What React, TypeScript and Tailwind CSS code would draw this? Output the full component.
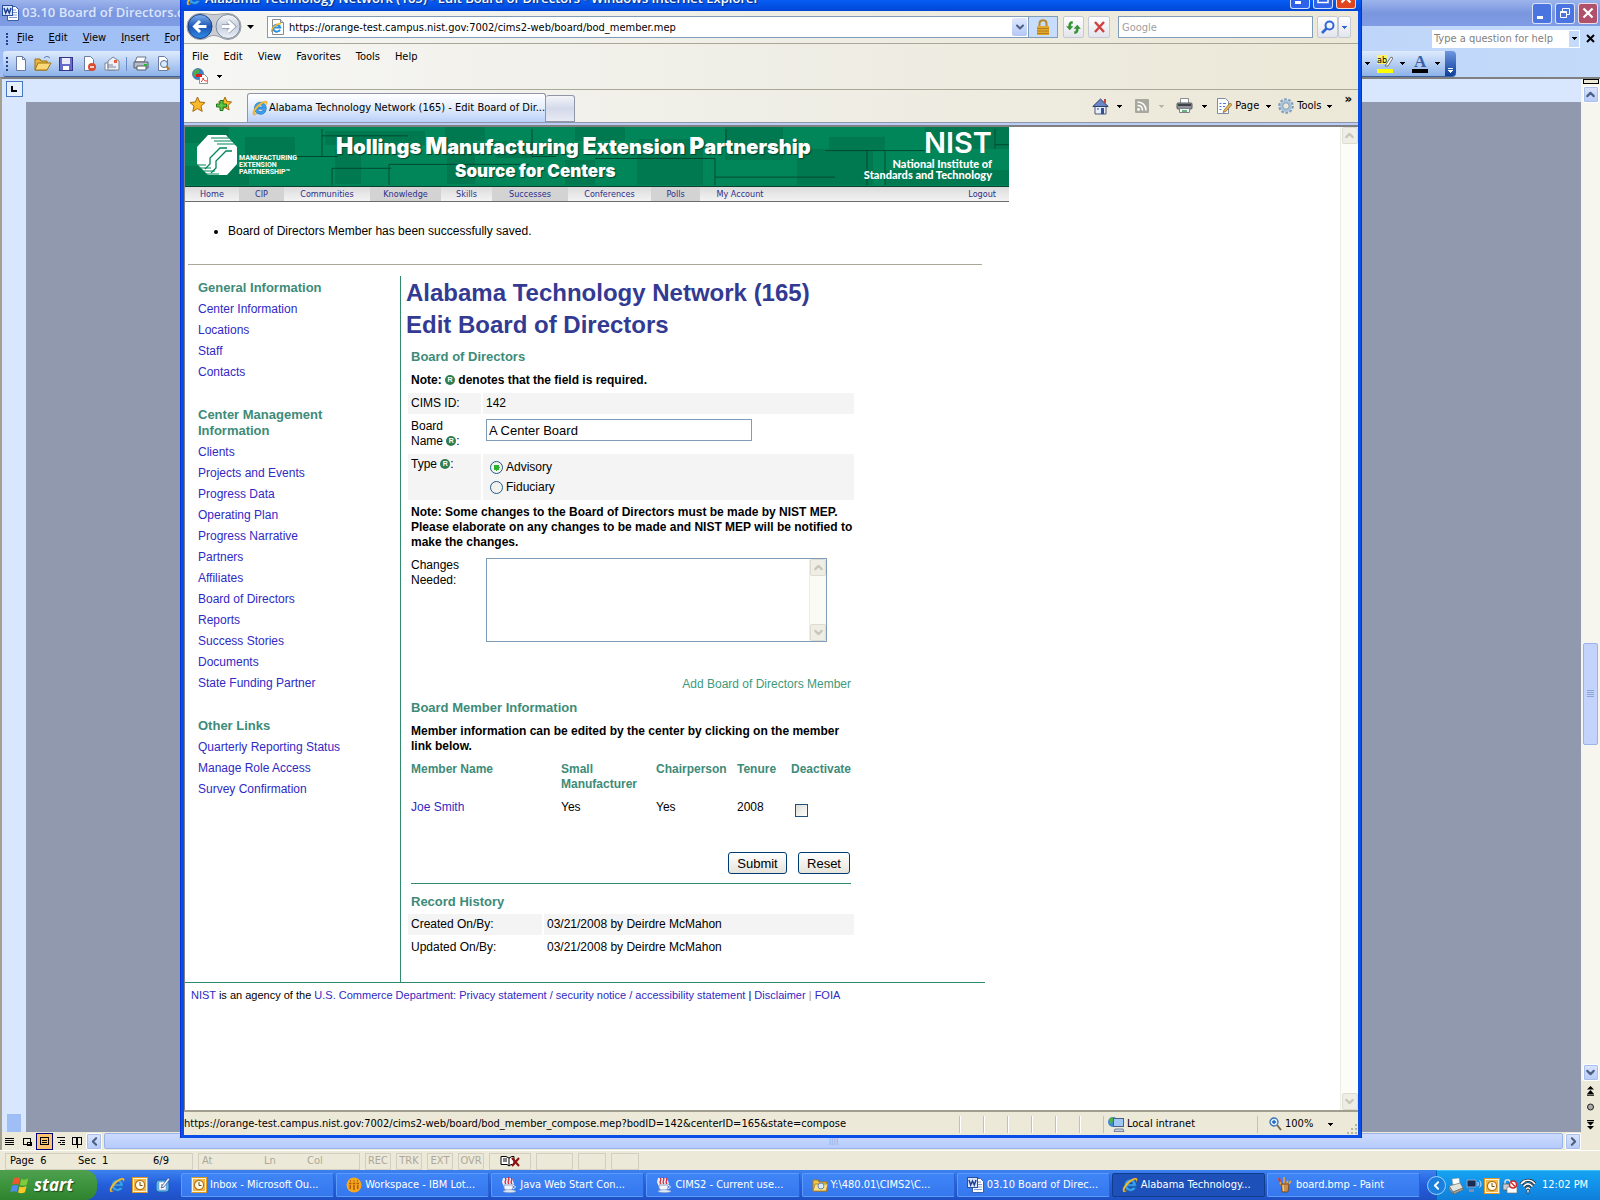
import { ReactNode } from 'react'
import { ChevronDown, ChevronLeft, ChevronRight, ChevronUp } from 'lucide-react'

const ui = "font-['DejaVu_Sans_Condensed','DejaVu_Sans',sans-serif]"

/* ---------- small icons ---------- */

function Caret({ className = 'text-black' }: { className?: string }) {
  return (
    <svg width="5" height="3" viewBox="0 0 5 3" className={`shrink-0 ${className}`} shapeRendering="crispEdges">
      <path d="M0 0h5v1H4v1H3v1H2V2H1V1H0z" fill="currentColor" />
    </svg>
  )
}

function IEIcon({ size = 16 }: { size?: number }) {
  return (
    <svg width={size} height={size} viewBox="0 0 16 16" className="shrink-0">
      <path d="M8.300 2.200a6 6 0 1 0 5.700 8.300h-3.400A2.800 2.800 0 0 1 5.600 9.300h8.700C14.600 5.200 12 2.200 8.300 2.200zM5.600 6.900a2.700 2.700 0 0 1 5.300 0z" fill="#3aa0ee" stroke="#1463b0" strokeWidth=".6" />
      <path d="M1.300 14.700C-.5 12.500 3 6.500 8 3.200 12 .6 15.200.4 15.300 2.600c0 .8-.3 1.600-.8 2.500.2-1.900-.5-2.700-2.400-2.100C7.900 4.400 2.600 10.600 2.500 13.200c0 1 1 1 2.500.4-1.500 1.300-3 1.900-3.700 1.100z" fill="#f9c132" stroke="#c98a10" strokeWidth=".3" />
    </svg>
  )
}

function PageIEIcon() {
  return (
    <svg width="16" height="16" viewBox="0 0 16 16" className="shrink-0">
      <path d="M2.500.5h8l3 3v12h-11z" fill="#fff" stroke="#8a8a8a" />
      <path d="M10.500.5v3h3" fill="#ddd" stroke="#8a8a8a" />
      <path d="M10 10.800A3.500 3.500 0 1 1 10.300 8.500H4" fill="none" stroke="#2a8fe0" strokeWidth="1.900" />
      <path d="M1.500 13C1 9.500 6 4.500 11 4.500" fill="none" stroke="#f4b92a" strokeWidth="1.300" />
    </svg>
  )
}

function WordIcon() {
  return (
    <svg width="17" height="16" viewBox="0 0 17 16" className="shrink-0">
      <path d="M5.500 1.500h8l3 3v11h-11z" fill="#fff" stroke="#3b5fa8" />
      <path d="M9 5h5M9 7.500h6M9 10h6M7 12.500h8" stroke="#7b9bd6" />
      <rect x=".5" y=".5" width="10" height="10" fill="#dbe6fa" stroke="#2a4f9e" />
      <path d="M2 3l1.700 5L5.500 4l1.800 4L9 3" fill="none" stroke="#1d3f91" strokeWidth="1.500" />
    </svg>
  )
}

function OutlookIcon() {
  return (
    <svg width="16" height="16" viewBox="0 0 16 16" className="shrink-0">
      <rect x=".5" y=".5" width="15" height="15" fill="#fff3cf" stroke="#e09a24" />
      <rect x="2" y="2" width="12" height="12" fill="#f2b84b" />
      <circle cx="8" cy="8" r="4.600" fill="#fffbea" stroke="#b8761a" strokeWidth="1.200" />
      <path d="M8 5v3.500h2.500" fill="none" stroke="#7a4a0a" />
    </svg>
  )
}

function JavaIcon() {
  return (
    <svg width="16" height="16" viewBox="0 0 16 16" className="shrink-0">
      <path d="M2 1h9l2 6-3 3H3L1 5z" fill="#fff" opacity=".9" />
      <path d="M4 1c3 2-2 3 1 6M7 .5c3 2-2 3.500 1 6.500M10 1c3 2-2 3 1 6" fill="none" stroke="#d8242f" strokeWidth="1.300" />
      <path d="M3 8h9v2.500c0 2-2 3-4.500 3S3 12.500 3 10.500z" fill="#eef3fc" stroke="#7d92bb" strokeWidth=".8" />
      <path d="M12 8.500c3 0 3 3 0 3" fill="none" stroke="#eef3fc" />
      <ellipse cx="8.500" cy="14.200" rx="6.500" ry="1.500" fill="#dfe8f8" stroke="#7d92bb" strokeWidth=".6" />
    </svg>
  )
}

function LotusIcon() {
  return (
    <svg width="16" height="16" viewBox="0 0 16 16" className="shrink-0">
      <circle cx="8" cy="8" r="7.500" fill="#f6a81c" />
      <path d="M3 6.500h2.500M6.700 6.500h2.600M10.500 6.500H13M4.300 8v4M8 8v5M11.700 8v4" stroke="#b3560a" strokeWidth="1.500" />
      <path d="M4 4h1M7.500 4h1M11 4h1" stroke="#b3560a" strokeWidth="1.500" />
    </svg>
  )
}

function FolderIcon() {
  return (
    <svg width="16" height="16" viewBox="0 0 16 16" className="shrink-0">
      <path d="M1 3h5l1 2h8v9H1z" fill="#f3c453" stroke="#a87a15" />
      <path d="M3 7h13l-2 7H1z" fill="#fbe08c" stroke="#a87a15" strokeWidth=".8" />
      <circle cx="9" cy="9" r="3" fill="#d4ecfb" stroke="#6c86a6" />
    </svg>
  )
}

function PaintIcon() {
  return (
    <svg width="16" height="16" viewBox="0 0 16 16" className="shrink-0">
      <path d="M4 8L2 1M7 8V0M9 8l3-7M11 8l3-4" strokeWidth="1.600" stroke="#e9a33a" />
      <path d="M3 5L2 1" stroke="#d33" strokeWidth="2" />
      <path d="M11 3.500l1-2.500" stroke="#3a7be0" strokeWidth="2" />
      <path d="M4 7h8l-1 8H5z" fill="#c98e4d" stroke="#6d4313" strokeWidth=".8" />
      <path d="M6 8l.5 6" stroke="#f6d7a4" />
    </svg>
  )
}

function DesktopIcon() {
  return (
    <svg width="16" height="16" viewBox="0 0 16 16" className="shrink-0">
      <rect x="1" y="3" width="13" height="12" rx="3" fill="#5db3ee" stroke="#1c5fae" />
      <rect x="4" y="5" width="7" height="8" fill="#fff" stroke="#7d9cc4" strokeWidth=".6" />
      <path d="M6 8h3M6 10h3" stroke="#2b6cc0" />
      <path d="M7 9l6-8 2 1-6 8-3 1z" fill="#f5fbff" stroke="#2a4f9e" strokeWidth=".7" />
    </svg>
  )
}

function WindowsFlag() {
  return (
    <svg width="20" height="20" viewBox="0 0 17 17" className="shrink-0">
      <path d="M3 3c2-1.300 3.800-1.200 5.500-.2L7.300 8C5.600 7 4 7.200 1.800 8.200z" fill="#f2562d" />
      <path d="M9.500 3.300c2 1 3.800.8 6-.3l-1.300 5.200c-2 1.100-3.800 1.200-5.800.3z" fill="#7fcb3c" />
      <path d="M1.500 9.400c2-1.200 3.800-1.200 5.500-.2l-1.300 5.200c-1.700-1-3.500-.8-5.500.3z" fill="#4f8cf0" />
      <path d="M8.100 9.700c2 1 3.800.8 5.900-.3l-1.300 5.200c-2 1.100-3.800 1.200-5.900.3z" fill="#fbc927" />
    </svg>
  )
}

function PrinterIcon() {
  return (
    <svg width="17" height="16" viewBox="0 0 17 16" className="shrink-0">
      <path d="M4.500.5h8v5h-8z" fill="#fff" stroke="#8b8f96" />
      <rect x="1" y="5" width="15" height="6" rx="1" fill="#8e9299" stroke="#54585f" />
      <path d="M2 7h13" stroke="#3f4248" strokeWidth="2" />
      <path d="M3.500 10.500h10v4h-10z" fill="#f5f8fb" stroke="#7d8289" />
      <path d="M6 13h5" stroke="#3a9d5b" strokeWidth="1.500" />
    </svg>
  )
}

function RequiredIcon() {
  return (
    <span className="inline-flex h-[10px] w-[10px] items-center justify-center rounded-full bg-[#2f7d4f] align-[2px] text-[7px] leading-none font-bold text-white">
      R
    </span>
  )
}

/* ---------- shared chrome ---------- */

const arrows = { up: ChevronUp, down: ChevronDown, left: ChevronLeft, right: ChevronRight }

function ScrollButton({ dir, disabled }: { dir: keyof typeof arrows; disabled?: boolean }) {
  const Icon = arrows[dir]
  return (
    <button
      aria-label={`Scroll ${dir}`}
      className={`flex h-[17px] w-[16px] shrink-0 items-center justify-center rounded-[2px] border ${
        disabled
          ? 'border-[#dcdccf] bg-[#efeee6] text-[#c9c7ba]'
          : 'border-white bg-gradient-to-b from-[#dbe5fe] to-[#b6cbf8] text-[#4d6185] shadow-[0_0_0_1px_#a9bfec_inset]'
      }`}
    >
      <Icon size={13} strokeWidth={4} />
    </button>
  )
}

function CaptionButton({ kind, className }: { kind: 'min' | 'max' | 'restore' | 'close'; className: string }) {
  return (
    <button aria-label={kind} className={`flex h-[21px] w-[20px] items-center justify-center rounded-[3px] border border-white/80 ${className}`}>
      <svg width="14" height="14" viewBox="0 0 14 14" fill="none" stroke="#fff">
        {kind === 'min' && <path d="M2 11.500h6" strokeWidth="3" />}
        {kind === 'max' && <path d="M2 3h10v8.500H2zM2 3.500h10" strokeWidth="1.500" />}
        {kind === 'restore' && <path d="M4.500 5V2.500h7v6H9M2.500 5.500h6v6h-6zM2.500 6.500h6" />}
        {kind === 'close' && <path d="M2.500 2.500l9 9M11.500 2.500l-9 9" strokeWidth="2.200" />}
      </svg>
    </button>
  )
}

/* ---------- Word window ---------- */

function WordToolbarIcons() {
  return (
    <svg width="160" height="18" viewBox="0 0 160 18" className="shrink-0">
      <path d="M3.500 1.500h6l3 3v11h-9z" fill="#fff" stroke="#6b7ba3" />
      <path d="M9.500 1.500v3h3" fill="none" stroke="#6b7ba3" />
      <path d="M22 4h5l1 2h6v9H22z" fill="#e8b33e" stroke="#9c7214" />
      <path d="M25 8h13l-4 7H22z" fill="#fbd878" stroke="#9c7214" />
      <path d="M31 3c2-2 4-2 6 0" fill="none" stroke="#4c6fae" />
      <rect x="46.500" y="2.500" width="13" height="13" fill="#6a6ac8" stroke="#33338a" />
      <rect x="49" y="3" width="8" height="6" fill="#e8ecfa" />
      <rect x="50" y="11" width="6" height="4" fill="#fff" />
      <path d="M71.500 1.500h6l3 3v11h-9z" fill="#fff" stroke="#6b7ba3" />
      <circle cx="79" cy="12" r="4" fill="#db4c35" />
      <path d="M77 12h4" stroke="#fff" strokeWidth="1.500" />
      <path d="M92 8h10v7H92z" fill="#fff" stroke="#7c8499" />
      <path d="M95 6l5-4 6 4v9H95z" fill="#eef0f6" stroke="#7c8499" />
      <path d="M94 10h6M94 12h9" stroke="#7c8499" />
      <rect x="101" y="5" width="3" height="3" fill="#e0613c" />
      <path d="M113.500 2v14" stroke="#6a8ccb" />
      <path d="M124 2h9l-2 5h-9z" fill="#fff" stroke="#6d7486" />
      <path d="M121 7h14v6h-14z" fill="#b9bdc8" stroke="#555c6d" />
      <path d="M124 11h9v4h-9z" fill="#fff" stroke="#555c6d" />
      <rect x="131" y="9" width="3" height="2" fill="#2db23a" />
      <path d="M145.500 1.500h6l3 3v11h-9z" fill="#fff" stroke="#6b7ba3" />
      <circle cx="151" cy="9" r="3.500" fill="#d8ecfa" stroke="#5a6f94" />
      <path d="M153.500 11.500l3 3" stroke="#c07c23" strokeWidth="2" />
    </svg>
  )
}

function WordWindow() {
  return (
    <div className={`flex min-h-0 flex-1 flex-col text-[11px] ${ui}`}>
      <div className="flex h-[26px] shrink-0 items-center justify-between bg-gradient-to-b from-[#9db5ec] via-[#7a96df] to-[#7f9ce4] px-[2px]">
        <div className="flex items-center gap-[3px] font-['Open_Sans',sans-serif] text-[13px] font-semibold whitespace-nowrap text-[#dbe5fb]">
          <WordIcon />
          03.10 Board of Directors.doc - Microsoft Word
        </div>
        <div className="flex gap-[3px]">
          <CaptionButton kind="min" className="bg-[#4a74e0]" />
          <CaptionButton kind="restore" className="bg-[#4a74e0]" />
          <CaptionButton kind="close" className="bg-[#b0506a]" />
        </div>
      </div>

      <div className="flex h-[25px] shrink-0 items-center justify-between bg-gradient-to-r from-[#9ebef5] to-[#c4dafa] pr-[5px] pl-[6px]">
        <nav className="flex items-center">
          <span className="mr-[9px] h-[12px] border-l-2 border-dotted border-[#27418f]" />
          <div className="flex gap-[15px]">
            {['File', 'Edit', 'View', 'Insert', 'Format', 'Tools'].map((m) => (
              <button key={m}>
                <u>{m[0]}</u>
                {m.slice(1)}
              </button>
            ))}
          </div>
        </nav>
        <div className="flex items-center">
          <input aria-label="Help question" placeholder="Type a question for help" className="h-[18px] w-[136px] bg-white px-[2px] placeholder:text-[#7f7f7f]" />
          <button aria-label="Help list" className="flex h-[18px] w-[12px] items-center justify-center border border-white bg-[#c4dafa]">
            <Caret />
          </button>
          <button aria-label="Close document" className="ml-[6px]">
            <svg width="9" height="9" viewBox="0 0 9 9" stroke="#000" strokeWidth="2"><path d="M1 1l7 7M8 1l-7 7" /></svg>
          </button>
        </div>
      </div>

      <div className="flex h-[26px] shrink-0 justify-between bg-gradient-to-r from-[#9ebef5] to-[#c4dafa] pr-[144px] pl-[3px]">
        <div className="flex w-[400px] items-center rounded-l-[3px] border-b border-[#3b619c] bg-gradient-to-b from-[#dfebfd] to-[#8db2e8] pl-[3px]">
          <span className="mr-[5px] h-[14px] border-l-2 border-dotted border-[#27418f]" />
          <WordToolbarIcons />
        </div>
        <div className="flex w-[300px] items-center justify-end rounded-r-[4px] border-b border-[#3b619c] bg-gradient-to-b from-[#dfebfd] to-[#8db2e8]">
          <div className="flex items-center gap-[7px] pr-[5px]">
            <Caret />
            <svg width="16" height="18" viewBox="0 0 16 18">
              <rect width="11" height="9" fill="#fbf36b" />
              <text x="0" y="8" fontSize="9" fill="#000">ab</text>
              <path d="M8 11l6-9 2 1-5 8z" fill="#fff" stroke="#555" strokeWidth=".8" />
              <rect y="14" width="16" height="4" fill="#ff0" />
            </svg>
            <Caret />
            <svg width="16" height="18" viewBox="0 0 16 18">
              <text x="2" y="12" fontSize="17" fontWeight="bold" fontFamily="Liberation Serif" fill="#3b5ea9">A</text>
              <rect y="14" width="16" height="4" />
            </svg>
            <Caret />
          </div>
          <button aria-label="Toolbar options" className="flex h-full w-[11px] flex-col items-center justify-end gap-px rounded-r-[4px] bg-gradient-to-b from-[#6e97e0] to-[#0a3f9c] pb-[3px]">
            <span className="h-px w-[5px] bg-white" />
            <Caret className="text-white" />
          </button>
        </div>
      </div>

      <div className="flex min-h-0 flex-1 border-t-2 border-l-2 border-t-[#808080] border-l-[#a3a08f] bg-[#ece9d8]">
        <div className="flex min-w-0 flex-1 flex-col">
          <div className="flex min-h-0 flex-1">
            <div className="flex w-[24px] shrink-0 flex-col items-center justify-between bg-[#d8e7fd] pt-[2px]">
              <button aria-label="Tab selector" className="flex h-[16px] w-[17px] items-center justify-center border border-[#4b78c4] bg-[#e6effd]">
                <span className="h-[6px] w-[6px] border-b-2 border-l-2 border-black" />
              </button>
              <span className="h-[18px] w-[14px] bg-[#9ebef5]" />
            </div>
            <div className="flex flex-1 flex-col">
              <div className="h-[23px] bg-[#d8e7fd]" />
              <div className="flex-1 bg-[#9099ae]" />
            </div>
          </div>
          <div className="flex h-[18px] shrink-0 items-center">
            <svg width="84" height="17" viewBox="0 0 84 17" stroke="#000" fill="none" className="shrink-0" shapeRendering="crispEdges">
              <path d="M3 5.500h9M3 7.500h9M3 9.500h9M3 11.500h9" />
              <path d="M21.500 5.500h7v6h-7zM25 9h4v3h-4z" />
              <rect x="34.500" y=".5" width="16" height="16" fill="#fdc36e" stroke="#00007f" />
              <path d="M38.500 4.500h8v7h-8zM40 7.500h5M40 9.500h5" />
              <path d="M55 4.500h8M58 7.500h5M56 9.500h3M60 9.500h3M58 11.500h5" />
              <path d="M70.500 4.500h4v7h-4zM75.500 4.500h4v7h-4zM75 12v3" />
            </svg>
            <ScrollButton dir="left" />
            <div className="mx-[2px] flex h-[16px] flex-1 items-center justify-center rounded-[2px] border border-[#98b4ea] bg-gradient-to-b from-[#cddafd] to-[#b5cbfa]">
              <span className="text-[8px] text-[#8ca6dd]">||||</span>
            </div>
            <ScrollButton dir="right" />
          </div>
        </div>
        <div className="flex w-[19px] shrink-0 flex-col items-center bg-[#f6f5ee]">
          <span className="mb-[2px] h-[5px] w-[16px] border border-black bg-[#ece9d8]" />
          <ScrollButton dir="up" />
          <div className="flex w-full flex-1 flex-col items-center">
            <div className="flex-[542]" />
            <div className="flex w-[15px] flex-[100] items-center justify-center rounded-[2px] border border-[#98b4ea] bg-[#c3d3fc]">
              <svg width="7" height="8" viewBox="0 0 7 8" stroke="#8ca6dd" shapeRendering="crispEdges"><path d="M0 .5h7M0 2.500h7M0 4.500h7M0 6.500h7" /></svg>
            </div>
            <div className="flex-[320]" />
          </div>
          <ScrollButton dir="down" />
          <div className="flex h-[69px] w-full justify-center bg-[#ece9d8] pt-[5px]">
            <svg width="9" height="46" viewBox="0 0 9 46">
              <path d="M1 3.500L4.500 0 8 3.500zM1 8l3.500-4L8 8zM1 8.500h7v1.200H1z" />
              <circle cx="4.500" cy="21" r="3" fill="#aaa" stroke="#222" />
              <path d="M1 34h7v1.200H1zM1 36h7l-3.500 3.500zM1 40h7l-3.500 3.500z" />
            </svg>
          </div>
        </div>
      </div>

      <div className="flex h-[20px] shrink-0 items-stretch gap-[5px] border-t border-white bg-[#ece9d8] pt-[2px] pl-[5px]">
        <div className="flex w-[188px] items-center border border-[#d2cfc2] pl-[4px]">
          <span className="w-[68px]">Page&nbsp; 6</span>
          <span className="w-[75px]">Sec&nbsp; 1</span>
          <span>6/9</span>
        </div>
        <div className="flex w-[162px] items-center border border-[#d2cfc2] pl-[3px] text-[#aca899]">
          <span className="w-[62px]">At</span>
          <span className="w-[43px]">Ln</span>
          <span>Col</span>
        </div>
        {['REC', 'TRK', 'EXT', 'OVR'].map((k) => (
          <div key={k} className="flex w-[26px] items-center justify-center border border-[#d2cfc2] text-[#aca899]">{k}</div>
        ))}
        <div className="flex w-[42px] items-center justify-center border border-[#d2cfc2]">
          <svg width="21" height="13" viewBox="0 0 21 13" fill="#fff" stroke="#000">
            <path d="M1 1.500h5l3 1.500 3-1.500h2v8h-3l-2 1.500-2-1.500H1zM9 3v8M3 4h4M3 6h4" />
            <path d="M12 3l7 8M19 3l-7 8" stroke="#8c1010" strokeWidth="2" />
          </svg>
        </div>
        <div className="w-[37px] border border-[#d2cfc2]" />
        <div className="w-[28px] border border-[#d2cfc2]" />
        <div className="w-[28px] border border-[#d2cfc2]" />
      </div>
    </div>
  )
}

/* ---------- taskbar ---------- */

const tasks: { icon: ReactNode; label: string; active?: boolean }[] = [
  { icon: <OutlookIcon />, label: 'Inbox - Microsoft Ou...' },
  { icon: <LotusIcon />, label: 'Workspace - IBM Lot...' },
  { icon: <JavaIcon />, label: 'Java Web Start Con...' },
  { icon: <JavaIcon />, label: 'CIMS2 - Current use...' },
  { icon: <FolderIcon />, label: 'Y:\\480.01\\CIMS2\\C...' },
  { icon: <WordIcon />, label: '03.10 Board of Direc...' },
  { icon: <IEIcon />, label: 'Alabama Technology...', active: true },
  { icon: <PaintIcon />, label: 'board.bmp - Paint' },
]

function Taskbar() {
  return (
    <div className={`flex h-[30px] shrink-0 items-stretch bg-gradient-to-b from-[#3c81f0] via-[#245edb] to-[#1f50c4] text-[11px] text-white ${ui}`}>
      <button className="flex w-[97px] shrink-0 items-center gap-[4px] rounded-r-[12px] bg-gradient-to-b from-[#4fa04f] via-[#3c943c] to-[#2f832f] pl-[10px] font-['Open_Sans',sans-serif] text-[17px] font-bold italic [text-shadow:1px_1px_1px_#1d4d1d]">
        <WindowsFlag />
        start
      </button>
      <div className="flex w-[84px] shrink-0 items-center gap-[7px] pl-[12px]">
        <IEIcon />
        <OutlookIcon />
        <DesktopIcon />
      </div>
      <div className="flex min-w-0 flex-1 items-center gap-[2px] pr-[16px]">
        {tasks.map((t) => (
          <button
            key={t.label}
            className={`flex h-[24px] min-w-0 flex-1 items-center gap-[3px] rounded-[2px] border pl-[9px] whitespace-nowrap ${
              t.active ? 'border-[#123c8c] bg-[#1d50b8]' : 'border-[#5c9bfb] border-r-[#2a62d0] bg-gradient-to-b from-[#3f85f7] to-[#3577ee]'
            }`}
          >
            {t.icon}
            {t.label}
          </button>
        ))}
      </div>
      <div className="flex w-[164px] shrink-0 items-center gap-[2px] border-t border-l border-[#0b62b8] border-t-[#3fc0f5] bg-gradient-to-b from-[#15a3f0] via-[#1290e9] to-[#0f7fd8]">
        <button aria-label="Show hidden icons" className="-ml-[10px] flex h-[19px] w-[19px] shrink-0 items-center justify-center rounded-full border border-[#9ed2fb] bg-[#1b7fe0]">
          <ChevronLeft size={13} strokeWidth={3.5} />
        </button>
        <svg width="16" height="16" viewBox="0 0 16 16">
          <path d="M4 1l7-1 1 6-7 1z" fill="#fff" stroke="#9a9a9a" strokeWidth=".6" />
          <path d="M1 8l11-3 3 5-10 4z" fill="#e4e4de" stroke="#77776f" strokeWidth=".7" />
          <path d="M1 8l4 6v2l-4-5zM5 14l10-4v2L6 16z" fill="#a5a59c" stroke="#5f5f57" strokeWidth=".5" />
        </svg>
        <svg width="16" height="16" viewBox="0 0 16 16">
          <path d="M1 2h9v7H1z" fill="#1a2c52" stroke="#8fa3c8" />
          <path d="M3 11h5v3H3z" fill="#7a8fb8" />
          <path d="M11.500 4c1 1 1 3 0 4M13.500 2.500c2 2 2 5 0 7" fill="none" stroke="#d8e6fb" />
        </svg>
        <OutlookIcon />
        <svg width="16" height="16" viewBox="0 0 16 16">
          <path d="M3 6V4c0-3 5-3 5 0v2" fill="none" stroke="#ddd" strokeWidth="1.500" />
          <rect x="1" y="6" width="8" height="6" fill="#c9cdd4" stroke="#555" strokeWidth=".7" />
          <path d="M5 9h10v6H5z" fill="#fff" stroke="#777" strokeWidth=".7" />
          <circle cx="11" cy="6.500" r="3.500" fill="#fff" stroke="#d62222" strokeWidth="1.500" />
          <path d="M9 4.500l4 4" stroke="#d62222" strokeWidth="1.300" />
        </svg>
        <svg width="16" height="16" viewBox="0 0 16 16" fill="none">
          <path d="M1 6c4-5 10-5 14 0M3.500 8.500c3-3.500 6-3.500 9 0M6 11c1.500-1.700 2.500-1.700 4 0" stroke="#222" strokeWidth="3" />
          <path d="M1 6c4-5 10-5 14 0M3.500 8.500c3-3.500 6-3.500 9 0M6 11c1.500-1.700 2.500-1.700 4 0" stroke="#fff" strokeWidth="1.700" />
          <path d="M7 11.500h2V15H7z" fill="#fff" stroke="#222" strokeWidth=".6" />
        </svg>
        <span className="ml-[4px] whitespace-nowrap">12:02 PM</span>
      </div>
    </div>
  )
}

/* ---------- Internet Explorer chrome ---------- */

function BrowserChrome() {
  const square = 'flex h-[22px] items-center justify-center rounded-[2px] border border-[#c5c9d6] bg-gradient-to-b from-white to-[#e3e5ec]'
  return (
    <>
      <div className="flex h-[26px] shrink-0 items-center justify-between rounded-t-[6px] bg-gradient-to-b from-[#0a5af0] via-[#0a62fb] to-[#0046d6] px-[5px]">
        <div className="flex items-center gap-[3px] font-['Open_Sans',sans-serif] text-[13px] leading-[20px] font-semibold whitespace-nowrap text-white [text-shadow:1px_1px_1px_#0b2a80]">
          <IEIcon />
          Alabama Technology Network (165) - Edit Board of Directors - Windows Internet Explorer
        </div>
        <div className="flex gap-[3px]">
          <CaptionButton kind="min" className="bg-[#2e62e8]" />
          <CaptionButton kind="max" className="bg-[#2e62e8]" />
          <CaptionButton kind="close" className="bg-[#e0451f]" />
        </div>
      </div>

      <div className="mx-[3px] shrink-0 bg-gradient-to-r from-[#f6f6f4] via-[#efeee6] to-[#ece8d7]">
        <div className="flex h-[33px] items-center border-b border-[#a9a797] pr-[7px] pl-[2px]">
          <svg width="70" height="30" viewBox="0 0 70 30" className="shrink-0">
            <defs>
              <linearGradient id="back" x1="0" y1="0" x2="0" y2="1">
                <stop offset="0" stopColor="#7fb2f0" />
                <stop offset=".5" stopColor="#1d56b4" />
                <stop offset="1" stopColor="#2f8be8" />
              </linearGradient>
              <linearGradient id="fwd" x1="0" y1="0" x2="0" y2="1">
                <stop offset="0" stopColor="#f6f8fb" />
                <stop offset=".5" stopColor="#c6cfde" />
                <stop offset="1" stopColor="#eef2f8" />
              </linearGradient>
            </defs>
            <path d="M14 1.500c7 0 8 1 14 1s8-1 14-1a13 13 0 0 1 0 26c-6 0-8-4-14-4s-7 4-14 4a13 13 0 0 1 0-26z" fill="#c9cdd3" stroke="#9aa0a8" />
            <circle cx="14" cy="14.500" r="12" fill="url(#back)" stroke="#1b3f86" />
            <path d="M20.500 14.500H9M14 9l-5.500 5.500L14 20" fill="none" stroke="#fff" strokeWidth="3" />
            <circle cx="42" cy="14.500" r="12" fill="url(#fwd)" stroke="#7d8798" />
            <path d="M36 14.500h11M42 9l5.500 5.500L42 20" fill="none" stroke="#8b95a8" strokeWidth="4.400" />
            <path d="M36 14.500h11M42 9l5.500 5.500L42 20" fill="none" stroke="#fff" strokeWidth="3" />
            <path d="M61 13h7l-3.500 4z" />
          </svg>
          <div className="ml-[11px] flex h-[22px] min-w-0 flex-1 items-center border border-[#7f9db9] bg-white pl-[2px]">
            <PageIEIcon />
            <input aria-label="Address" defaultValue="https://orange-test.campus.nist.gov:7002/cims2-web/board/bod_member.mep" className="ml-[3px] h-[18px] min-w-0 flex-1 outline-none" />
            <button aria-label="Address history" className="flex h-[18px] w-[15px] items-center justify-center rounded-[2px] bg-gradient-to-b from-[#dfe8fe] to-[#b4c8f6] text-[#4d6185]">
              <ChevronDown size={12} strokeWidth={4} />
            </button>
            <button aria-label="Security report" className="ml-px flex h-[20px] w-[29px] items-center justify-center border-l border-[#7f9db9] bg-[#c8dcfb]">
              <svg width="14" height="16" viewBox="0 0 14 16">
                <path d="M3.500 8V4.500c0-4.500 7-4.500 7 0V8" fill="none" stroke="#b5892c" strokeWidth="2" />
                <rect x="1" y="7" width="12" height="9" fill="#e3a92f" />
                <path d="M1 9.500h12M1 12h12M1 14.500h12" stroke="#b47e17" />
              </svg>
            </button>
          </div>
          <button aria-label="Refresh" className={`ml-[5px] w-[21px] ${square}`}>
            <svg width="15" height="15" viewBox="0 0 15 15" fill="#2f9a2f" stroke="#1d6e1d" strokeWidth=".4">
              <path d="M6.500 1.500v2C5 3.500 4.800 4 4.800 6.500h2L3.700 10 .7 6.500h2C2.700 3 3.500 1.500 6.500 1.500z" />
              <path d="M8.500 13.500v-2c1.500 0 1.700-.5 1.700-3h-2L11.300 5l3 3.500h-2c0 3.500-.8 5-3.800 5z" />
            </svg>
          </button>
          <button aria-label="Stop" className={`ml-[4px] w-[22px] ${square}`}>
            <svg width="13" height="12" viewBox="0 0 13 12" stroke="#d04040" strokeWidth="2.400"><path d="M2 1l9 10M11 1L2 11" /></svg>
          </button>
          <input aria-label="Search" placeholder="Google" className="ml-[8px] h-[22px] w-[195px] border border-[#7f9db9] bg-white px-[3px] placeholder:text-[#a0a0a0]" />
          <button aria-label="Search web" className={`ml-[4px] w-[21px] ${square}`}>
            <svg width="14" height="14" viewBox="0 0 14 14" fill="none" stroke="#2f66d8" strokeWidth="2"><circle cx="8.500" cy="5.500" r="4" /><path d="M5.500 8.500L1 13" strokeWidth="2.600" /></svg>
          </button>
          <button aria-label="Search options" className={`w-[13px] ${square}`}>
            <Caret className="text-[#2f66d8]" />
          </button>
        </div>

        <div className="flex h-[46px] flex-col border-b border-[#a9a797] pl-[8px]">
          <nav className="flex h-[24px] items-center gap-[15px] pt-[2px]">
            {['File', 'Edit', 'View', 'Favorites', 'Tools', 'Help'].map((m) => (
              <button key={m}>{m}</button>
            ))}
          </nav>
          <button aria-label="Convert to PDF" className="flex items-center gap-[9px] self-start">
            <svg width="16" height="16" viewBox="0 0 16 16">
              <circle cx="6" cy="6" r="5.500" fill="#3b82c9" stroke="#2a5e8f" strokeWidth=".6" />
              <path d="M1.500 4c2-3.500 6-3.500 6-1S5 5 5 7s-3 2-4-1z" fill="#4cae4a" />
              <path d="M7.500 6.500h5l3 3v6h-8z" fill="#fff" stroke="#777" strokeWidth=".8" />
              <path d="M4 6h6v3H4z" fill="#e31b1b" />
              <path d="M9 14c2-2 2-3 2-4 0 2 2 3 4 3" fill="none" stroke="#e31b1b" strokeWidth=".9" />
            </svg>
            <Caret />
          </button>
        </div>

        <div className="flex h-[33px] items-end justify-between border-b border-[#8f96a8] pl-[5px]">
          <div className="flex items-end">
            <svg width="44" height="18" viewBox="0 0 44 18" className="mb-[8px] shrink-0">
              <path d="M8.500 1l2.200 5 5.300.5-4 3.600 1.200 5.300-4.700-2.800-4.700 2.800L5 10.100 1 6.500 6.300 6z" fill="#fbb829" stroke="#a56c0c" />
              <path d="M36 1l2 4.500 4.600.5-3.500 3.200 1 4.800L36 11.500 32 14l1-5-3.500-3 4.600-.5z" fill="#fbb829" stroke="#a56c0c" />
              <path d="M31 4.500h3V8h3.500v3H34v3.500h-3V11h-3.500V8H31z" fill="#5cc64a" stroke="#1f7a17" />
            </svg>
            <div className="ml-[14px] flex h-[29px] w-[299px] items-center gap-px rounded-t-[3px] border border-b-0 border-[#8f96a8] bg-gradient-to-b from-white via-[#e3edfd] to-[#b9d0f8] pl-[4px] whitespace-nowrap">
              <IEIcon />
              Alabama Technology Network (165) - Edit Board of Dir...
            </div>
            <button aria-label="New tab" className="h-[27px] w-[29px] rounded-t-[3px] border border-l-0 border-[#8f96a8] bg-gradient-to-b from-[#f4f5fa] via-[#d4d9ea] to-[#e8eaf4]" />
          </div>
          <div className="flex h-full items-center self-start pr-[6px]">
            <svg width="17" height="17" viewBox="0 0 17 17">
              <path d="M3 8h11v8H3z" fill="#e9eef7" stroke="#4a5a7a" />
              <path d="M.8 8.500L8.500 1l7.700 7.500z" fill="#6a86c4" stroke="#2d3f6c" />
              <path d="M12 1h2v4h-2z" fill="#c04a3a" />
              <path d="M9 10h3v6H9z" fill="#2f4f9a" />
              <path d="M5 10h2v2H5z" fill="#7fa2dd" />
            </svg>
            <span className="mx-[8px] flex"><Caret /></span>
            <svg width="14" height="14" viewBox="0 0 14 14" className="ml-[5px]">
              <rect width="14" height="14" rx="1" fill="#a8a89e" />
              <circle cx="3.500" cy="10.500" r="1.400" fill="#fff" />
              <path d="M2.500 6.500c3 0 5 2 5 5M2.500 3c5 0 8.500 3.500 8.500 8.500" fill="none" stroke="#fff" strokeWidth="1.500" />
            </svg>
            <span className="mr-[12px] ml-[10px] flex"><Caret className="text-[#b8b6a8]" /></span>
            <PrinterIcon />
            <span className="mx-[9px] flex"><Caret /></span>
            <button className="flex items-center gap-[3px]">
              <svg width="16" height="16" viewBox="0 0 16 16">
                <path d="M1.500.5h8l3 3v12h-11z" fill="#fff" stroke="#7f8aa3" />
                <path d="M3.500 5.500h2M7 5.500h3M3.500 8.500h2M3.500 11.500h2M7 8.500h2" stroke="#4a7bd0" />
                <path d="M8 12l6-7 2 1.500-6 7-3 1z" fill="#e5b45a" stroke="#8a6420" strokeWidth=".7" />
              </svg>
              Page
            </button>
            <span className="mx-[7px] flex"><Caret /></span>
            <button className="flex items-center gap-[3px]">
              <svg width="16" height="16" viewBox="0 0 16 16" fill="none">
                <circle cx="8" cy="8" r="6.600" stroke="#7d9cbb" strokeWidth="2.400" strokeDasharray="2.600 1.550" />
                <circle cx="8" cy="8" r="4.600" stroke="#a9c3dd" strokeWidth="2.600" />
                <circle cx="8" cy="8" r="3.200" stroke="#6f8fae" strokeWidth=".8" />
              </svg>
              Tools
            </button>
            <span className="ml-[6px] flex"><Caret /></span>
            <span className="mb-[16px] ml-[12px] text-[13px] leading-none font-bold">»</span>
          </div>
        </div>
        <div className="h-[4px] border-b-2 border-[#808080] bg-[#b9cdf6]" />
      </div>
    </>
  )
}

function BrowserStatus() {
  return (
    <div className="mx-[3px] flex h-[25px] shrink-0 items-center border-t-2 border-[#a19e8f] bg-[#ece9d8] pt-px">
      <span className="min-w-0 flex-1 overflow-hidden whitespace-nowrap">https://orange-test.campus.nist.gov:7002/cims2-web/board/bod_member_compose.mep?bodID=142&amp;centerID=165&amp;state=compose</span>
      {[0, 1, 2, 3, 4, 5].map((n) => (
        <span key={n} className="h-[17px] w-[24px] border-l border-[#c5c2b2] shadow-[1px_0_0_#fff_inset]" />
      ))}
      <div className="flex h-[17px] w-[154px] items-center gap-[2px] border-l border-[#c5c2b2] pl-[4px]">
        <svg width="17" height="16" viewBox="0 0 17 16">
          <circle cx="5" cy="6" r="5" fill="#3c86d8" />
          <path d="M1 4c2-3 4-3 5-1S3 6 3 9z" fill="#4eb04a" />
          <rect x="5.500" y="2.500" width="10" height="8" fill="#9fc7f5" stroke="#4c5f86" />
          <path d="M7 13h8l1 2.500H6z" fill="#c9d0dd" stroke="#4c5f86" strokeWidth=".7" />
        </svg>
        Local intranet
      </div>
      <button className="flex h-[17px] w-[89px] items-center border-l border-[#c5c2b2] pl-[11px]">
        <svg width="13" height="14" viewBox="0 0 13 14" className="mr-[3px]">
          <circle cx="5" cy="5" r="4" fill="#dff0fd" stroke="#3670c0" strokeWidth="1.300" />
          <path d="M8 8l4 5" stroke="#7b6a4a" strokeWidth="2" />
          <path d="M5 3v4M3 5h4" stroke="#1b5fc0" strokeWidth="1.300" />
        </svg>
        100%
        <span className="ml-[15px] flex"><Caret /></span>
      </button>
      <svg width="12" height="12" viewBox="0 0 12 12" fill="#b8b4a2" className="shrink-0 self-end">
        <path d="M9 1h2v2H9zM5 5h2v2H5zM9 5h2v2H9zM1 9h2v2H1zM5 9h2v2H5zM9 9h2v2H9z" />
      </svg>
    </div>
  )
}

/* ---------- web page ---------- */

function Banner() {
  return (
    <header className="relative flex h-[60px] items-start overflow-hidden border-b border-[#0b4030] bg-[#008659] text-white">
      <svg className="absolute inset-0 h-full w-full" viewBox="0 0 824 60" preserveAspectRatio="none" shapeRendering="crispEdges">
        <g fill="#00704b" opacity=".6">
          <path d="M0 0h44v16H0zM60 10h50v20H60zM140 4h100v14H140zM150 22h26v36h-26zM260 0h40v14h-40zM262 12h28v46h-28zM310 14h38v18h-38zM0 40h64v19H0z" />
          <path d="M452 12h66v47h-66zM380 34h30v25h-30zM540 0h58v34h-58zM612 22h76v37h-76zM644 10h56v14h-56zM700 44h124v15H700zM740 0h84v22h-84zM390 0h50v14h-50z" />
        </g>
        <path d="M137 2v28M137 9h86M110 30h43M147 59V42h59M204 59V38h140M347 2v28M347 30h24M410 32h120v27M530 51h120M541 2v22M640 24h100M682 24v35M700 24v35M810 2v20M810 18h14" stroke="#00492f" fill="none" />
      </svg>
      <div className="relative flex w-[151px] shrink-0 items-start pt-[7px] pl-[11px]">
        <svg width="43" height="43" viewBox="0 0 43 43" className="shrink-0">
          <path d="M12 1h18l11 12v17L31 41H12L1 30V13z" fill="#fff" />
          <path d="M15 4h20M18 7h20M21 10h20" stroke="#008659" strokeWidth="1.200" />
          <path d="M31 14h-7L14 24v6l-5 5M36 17h-6L20 27v7l-5 5" stroke="#008659" strokeWidth="1.300" fill="none" />
          <path d="M0 31h10M2 34h13M5 37h14M8 40h15" stroke="#008659" strokeWidth="1.200" />
        </svg>
        <div className="pt-[21px] font-['Roboto',sans-serif] text-[7px] leading-[7px] font-bold">
          MANUFACTURING
          <br />
          EXTENSION
          <br />
          PARTNERSHIP™
        </div>
      </div>
      <div className="relative pt-[7px] text-center font-['Inter',sans-serif] font-black [text-shadow:1px_1px_1px_#00442c]">
        <div className="text-[20px] leading-[24px] whitespace-nowrap">
          <span className="text-[23px]">H</span>ollings <span className="text-[23px]">M</span>anufacturing <span className="text-[23px]">E</span>xtension <span className="text-[23px]">P</span>artnership
        </div>
        <div className="pr-[76px] text-[17px] leading-[24px]">Source for Centers</div>
      </div>
      <div className="relative ml-auto pt-[4px] pr-[17px] text-right font-['Lato',sans-serif] text-[11px] leading-[11px] font-black">
        <div className="font-['Inter',sans-serif] text-[29px] leading-[24px] font-semibold">NIST</div>
        <div className="pt-[3px]">National Institute of</div>
        <div>Standards and Technology</div>
      </div>
    </header>
  )
}

function SiteNav() {
  const link = 'flex items-center justify-center'
  return (
    <nav className="flex h-[15px] items-stretch border-b border-[#6b6b6b] bg-gradient-to-b from-[#dcdcdc] to-[#f3f3f3] font-['DejaVu_Sans_Condensed',sans-serif] text-[9px] text-[#2d2f8a]">
      <a href="#" className={`w-[54px] ${link}`}>Home</a>
      <a href="#" className={`w-[45px] bg-[#d3d3d3] ${link}`}>CIP</a>
      <a href="#" className={`w-[86px] ${link}`}>Communities</a>
      <a href="#" className={`w-[71px] bg-[#d3d3d3] ${link}`}>Knowledge</a>
      <a href="#" className={`w-[51px] ${link}`}>Skills</a>
      <a href="#" className={`w-[76px] bg-[#d3d3d3] ${link}`}>Successes</a>
      <a href="#" className={`w-[83px] ${link}`}>Conferences</a>
      <a href="#" className={`w-[49px] bg-[#d3d3d3] ${link}`}>Polls</a>
      <a href="#" className={`w-[80px] ${link}`}>My Account</a>
      <a href="#" className="mr-[13px] ml-auto flex items-center">Logout</a>
    </nav>
  )
}

const sidebar = [
  { title: 'General Information', links: ['Center Information', 'Locations', 'Staff', 'Contacts'] },
  {
    title: 'Center Management Information',
    links: [
      'Clients', 'Projects and Events', 'Progress Data', 'Operating Plan', 'Progress Narrative', 'Partners',
      'Affiliates', 'Board of Directors', 'Reports', 'Success Stories', 'Documents', 'State Funding Partner',
    ],
  },
  { title: 'Other Links', links: ['Quarterly Reporting Status', 'Manage Role Access', 'Survey Confirmation'] },
]

function Sidebar() {
  return (
    <aside className="w-[216px] shrink-0 border-r border-[#2f8a6b] pt-[3px] pl-[13px]">
      {sidebar.map((s) => (
        <section key={s.title} className="mb-[23px]">
          <h3 className="w-[150px] pt-px pb-[3px] text-[13px] leading-[16px] font-bold text-[#3d8b78]">{s.title}</h3>
          <ul>
            {s.links.map((l) => (
              <li key={l} className="h-[21px] leading-[21px]">
                <a href="#" className="text-[#3029c4]">{l}</a>
              </li>
            ))}
          </ul>
        </section>
      ))}
    </aside>
  )
}

const sectionTitle = 'py-[2px] text-[13px] leading-[17px] font-bold text-[#3d8b78]'
const cell = 'p-[3px] text-left align-top font-normal'
const shaded = `${cell} bg-[#f4f4f4]`
const radio = 'h-[13px] w-[13px] appearance-none rounded-full border border-[#21598f] bg-[#f3f3ee] bg-clip-padding checked:bg-[radial-gradient(circle,#2db22d_0_3px,#f3f3ee_3px)]'

function BoardForm() {
  const button = 'h-[22px] rounded-[3px] border border-[#003c74] bg-gradient-to-b from-white to-[#e6e4da] text-[13px]'
  return (
    <form className="w-[450px]">
      <table className="w-full table-fixed border-separate border-spacing-[2px]">
        <colgroup>
          <col className="w-[73px]" />
          <col />
        </colgroup>
        <tbody>
          <tr>
            <td colSpan={2} className="px-[3px] pb-px"><h2 className={sectionTitle}>Board of Directors</h2></td>
          </tr>
          <tr>
            <td colSpan={2} className="p-[3px] font-bold">Note: <RequiredIcon /> denotes that the field is required.</td>
          </tr>
          <tr>
            <th className={shaded}>CIMS ID:</th>
            <td className={shaded}>142</td>
          </tr>
          <tr>
            <th className={cell}><label htmlFor="name">Board Name <RequiredIcon />:</label></th>
            <td className={cell}>
              <input id="name" defaultValue="A Center Board" className="block h-[22px] w-[266px] border border-[#7f9db9] px-[2px] text-[13px]" />
            </td>
          </tr>
          <tr>
            <th className={shaded}>Type <RequiredIcon />:</th>
            <td className={shaded}>
              <label className="flex h-[20px] items-center gap-[3px] pl-[4px]"><input type="radio" name="type" defaultChecked className={radio} />Advisory</label>
              <label className="flex h-[20px] items-center gap-[3px] pl-[4px]"><input type="radio" name="type" className={radio} />Fiduciary</label>
            </td>
          </tr>
          <tr>
            <td colSpan={2} className="py-[3px] pl-[3px] font-bold">
              Note: Some changes to the Board of Directors must be made by NIST MEP. Please elaborate on any changes to be made and NIST MEP will be notified to make the changes.
            </td>
          </tr>
          <tr>
            <th className={cell}><label htmlFor="changes">Changes Needed:</label></th>
            <td className={`${cell} pb-[5px]`}>
              <div className="flex h-[84px] w-[341px] border border-[#7f9db9]">
                <textarea id="changes" className="min-w-0 flex-1 resize-none outline-none" />
                <div className="flex w-[17px] flex-col items-center justify-between border-l border-[#eeede5] bg-[#fbfbf6]">
                  <ScrollButton dir="up" disabled />
                  <ScrollButton dir="down" disabled />
                </div>
              </div>
            </td>
          </tr>
        </tbody>
      </table>

      <div className="mt-[28px] pr-[5px] text-right"><a href="#" className="text-[#3d9a7c]">Add Board of Directors Member</a></div>

      <h2 className={`mt-[5px] px-[5px] ${sectionTitle}`}>Board Member Information</h2>
      <p className="mt-[3px] px-[5px] py-[3px] font-bold">Member information can be edited by the center by clicking on the member link below.</p>
      <table className="w-full table-fixed border-separate border-spacing-[2px]">
        <thead>
          <tr className="text-left align-top text-[#3d8b78]">
            <th className="w-[148px] p-[3px]">Member Name</th>
            <th className="w-[93px] p-[3px]">Small Manufacturer</th>
            <th className="w-[79px] p-[3px]">Chairperson</th>
            <th className="w-[52px] p-[3px]">Tenure</th>
            <th className="p-[3px]">Deactivate</th>
          </tr>
        </thead>
        <tbody>
          <tr>
            <td className={cell}><a href="#" className="text-[#3029c4]">Joe Smith</a></td>
            <td className={cell}>Yes</td>
            <td className={cell}>Yes</td>
            <td className={cell}>2008</td>
            <td className="px-[7px] pt-[7px] pb-[3px]">
              <input type="checkbox" aria-label="Deactivate Joe Smith" className="block h-[13px] w-[13px] appearance-none border border-[#1c5180] bg-gradient-to-br from-[#dcdcd7] to-white" />
            </td>
          </tr>
        </tbody>
      </table>

      <div className="mx-[5px] mt-[30px] border-b border-[#2f8a6b] pb-[9px]">
        <div className="flex justify-end gap-[11px] pr-px">
          <button type="submit" className={`w-[59px] ${button}`}>Submit</button>
          <button type="reset" className={`w-[52px] ${button}`}>Reset</button>
        </div>
      </div>

      <h2 className={`mt-[7px] px-[5px] ${sectionTitle}`}>Record History</h2>
      <table className="w-full table-fixed border-separate border-spacing-[2px]">
        <tbody>
          <tr>
            <th className={`w-[134px] ${shaded}`}>Created On/By:</th>
            <td className={shaded}>03/21/2008 by Deirdre McMahon</td>
          </tr>
          <tr>
            <th className={cell}>Updated On/By:</th>
            <td className={cell}>03/21/2008 by Deirdre McMahon</td>
          </tr>
        </tbody>
      </table>
    </form>
  )
}

function WebPage() {
  return (
    <div className="min-w-0 flex-1 overflow-hidden bg-white font-['Liberation_Sans',sans-serif] text-[12px] leading-[15px] text-black">
      <div className="max-w-[824px]">
        <Banner />
        <SiteNav />
        <ul className="list-disc pt-[22px] pb-[25px] pl-[43px]">
          <li>Board of Directors Member has been successfully saved.</li>
        </ul>
        <hr className="mr-[27px] ml-[3px] border-[#aca899]" />
        <div className="mr-[24px] border-b border-[#2f8a6b] pt-[11px]">
          <div className="flex">
            <Sidebar />
            <main className="pt-px pb-[22px] pl-[5px]">
              <h1 className="text-[24px] leading-[32px] font-bold text-[#333a92]">
                Alabama Technology Network (165)
                <br />
                Edit Board of Directors
              </h1>
              <div className="pt-[3px]"><BoardForm /></div>
            </main>
          </div>
        </div>
        <footer className="pt-[5px] pl-[6px] text-[11px] text-[#3029c4]">
          <a href="#">NIST</a> <span className="text-black">is an agency of the</span> <a href="#">U.S. Commerce Department:</a> <a href="#">Privacy statement / security notice / accessibility statement</a>{' '}
          <span className="text-black">|</span> <a href="#">Disclaimer</a> <span className="text-[#b8963c]">|</span> <a href="#">FOIA</a>
        </footer>
      </div>
    </div>
  )
}

function BrowserWindow() {
  return (
    <div className={`absolute -top-[15px] right-[238px] bottom-[62px] left-[180px] flex flex-col rounded-t-[6px] border-x border-[#0831d9] bg-[#0a4ee8] pb-[3px] text-[11px] ${ui}`}>
      <BrowserChrome />
      <div className="mx-[3px] flex min-h-0 flex-1 border-l border-[#808080]">
        <WebPage />
        <div className="flex w-[18px] shrink-0 flex-col items-center justify-between border-l border-[#eeede5] bg-[#fcfcf8]">
          <ScrollButton dir="up" disabled />
          <ScrollButton dir="down" disabled />
        </div>
      </div>
      <BrowserStatus />
    </div>
  )
}

export default function App() {
  return (
    <div className="relative flex h-screen flex-col overflow-hidden">
      <WordWindow />
      <Taskbar />
      <BrowserWindow />
    </div>
  )
}
